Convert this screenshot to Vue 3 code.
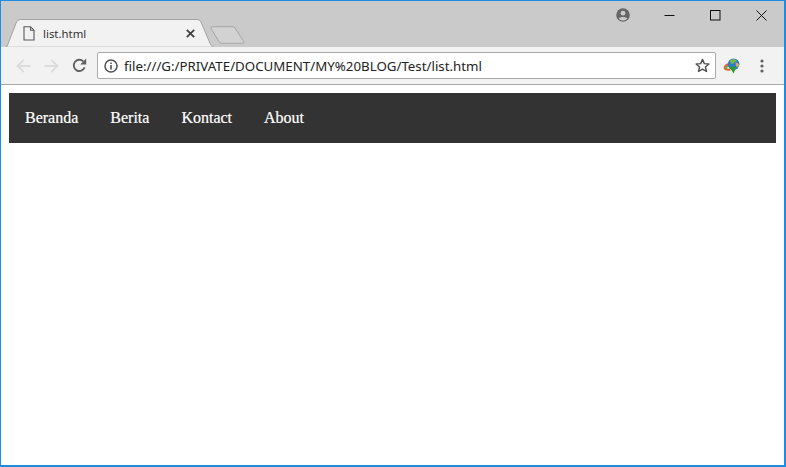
<template>
  <div class="window">
    <header class="titlebar">
      <div class="tab">
        <svg class="tab-shape" width="208" height="28" viewBox="0 0 208 28">
          <path d="M0 27.5 L1 27.5 L10.5 3 Q11.5 .5 14.5 .5 L191 .5 Q194 .5 195 3 L204.5 25.5 Q205.5 27.5 207.5 27.5" fill="#f2f2f2" stroke="#a3a3a3" stroke-width="1" />
        </svg>
        <svg class="doc" width="12" height="15" viewBox="0 0 12 15">
          <path d="M1 .7 H7.5 L11 4.2 V14 H1 Z M7.5 .7 V4.2 H11" fill="none" stroke="#5a5a5a" stroke-width="1.1" />
        </svg>
        <span class="tab-title">list.html</span>
        <svg class="tab-close" width="9" height="9" viewBox="0 0 9 9">
          <path d="M.8 .8 L8.2 8.2 M8.2 .8 L.8 8.2" stroke="#3c3c3c" stroke-width="1.7" />
        </svg>
      </div>
      <svg class="newtab" width="36" height="19" viewBox="0 0 36 19">
        <path d="M1 2.5 Q.7 .7 2.5 .7 H23 Q24.5 .7 25 2 L33.7 15.5 Q34.5 17.3 32.5 17.3 H11.5 Q10 17.3 9.3 16 Z" fill="#d2d2d2" stroke="#a5a5a5" stroke-width="1" />
      </svg>
      <div class="spacer"></div>
      <svg class="profile" width="14" height="14" viewBox="0 0 14 14">
        <circle cx="7" cy="7" r="6.8" fill="#666" />
        <circle cx="7" cy="5.2" r="2.4" fill="#cacaca" />
        <path d="M2.8 10.4 C4 8.4 10 8.4 11.2 10.4 C10 12 8.5 12.4 7 12.4 C5.5 12.4 4 12 2.8 10.4 Z" fill="#cacaca" />
      </svg>
      <div class="win-controls">
        <button class="win-btn"><svg width="11" height="11" viewBox="0 0 11 11"><path d="M.5 5.5 H10.5" stroke="#111" stroke-width="1" /></svg></button>
        <button class="win-btn"><svg width="11" height="11" viewBox="0 0 11 11"><rect x=".5" y=".5" width="9.5" height="9.5" fill="none" stroke="#111" stroke-width="1" /></svg></button>
        <button class="win-btn"><svg width="11" height="11" viewBox="0 0 11 11"><path d="M.5 .5 L10.5 10.5 M10.5 .5 L.5 10.5" stroke="#111" stroke-width="1" /></svg></button>
      </div>
    </header>

    <div class="toolbar">
      <svg class="nav-icon back" width="15" height="14" viewBox="0 0 15 14">
        <path d="M14.5 7 H2 M7.6 1 L1.6 7 L7.6 13" fill="none" stroke="#dcdcdc" stroke-width="1.9" />
      </svg>
      <svg class="nav-icon forward" width="15" height="14" viewBox="0 0 15 14">
        <path d="M.5 7 H13 M7.4 1 L13.4 7 L7.4 13" fill="none" stroke="#dcdcdc" stroke-width="1.9" />
      </svg>
      <svg class="nav-icon reload" width="15" height="15" viewBox="0 0 15 15">
        <path d="M12.6 9.4 A5.6 5.6 0 1 1 11.3 3.4" fill="none" stroke="#606060" stroke-width="1.9" />
        <path d="M14.2 .6 V6.6 H8.2 Z" fill="#606060" />
      </svg>
      <div class="omnibox">
        <svg class="info" width="14" height="14" viewBox="0 0 14 14">
          <circle cx="7" cy="7" r="6" fill="none" stroke="#505050" stroke-width="1.5" />
          <path d="M7 6 V10.6 M7 3.4 V5" stroke="#505050" stroke-width="1.6" />
        </svg>
        <span class="url">file:///G:/PRIVATE/DOCUMENT/MY%20BLOG/Test/list.html</span>
        <svg class="star" width="15" height="15" viewBox="0 0 15 15">
          <path d="M7.5 1.4 L9.3 5.6 L13.9 6 L10.4 9 L11.5 13.5 L7.5 11.1 L3.5 13.5 L4.6 9 L1.1 6 L5.7 5.6 Z" fill="none" stroke="#505050" stroke-width="1.4" stroke-linejoin="round" />
        </svg>
      </div>
      <svg class="idm" width="17" height="16" viewBox="0 0 17 16">
        <path d="M.6 10 C1 6 4.5 4.6 7 5.4 L7.5 12.5 C5 13 1.5 13 .6 10 Z" fill="#e0682c" />
        <path d="M2.2 10 C3 7.6 5 7 7 7.6 L7.5 10.5 C5.5 11 3.5 11 2.2 10 Z" fill="#5db04a" />
        <path d="M3.6 10 C4.4 9 5.5 8.8 7 9.2 L7.5 10.6 C6 10.8 4.6 10.8 3.6 10 Z" fill="#f3f3f3" />
        <circle cx="10.6" cy="6.2" r="5.8" fill="#2f7dc9" />
        <path d="M7 2.5 C9 .8 12 .8 13.5 2.5 C12.5 4.5 10.5 3.8 10 6 C8.5 6.5 7.2 5 7 2.5 Z" fill="#7ab648" />
        <path d="M12.5 4.5 C14 4.5 15.6 5.5 16 7 C15.5 9 14 9.5 13.2 8.5 Z" fill="#d8b24a" />
        <path d="M5.4 7.6 L9 9.4 L13.6 8 L10.6 15.6 L9 13 Z" fill="#2e9a2e" />
      </svg>
      <svg class="menu" width="4" height="14" viewBox="0 0 4 14">
        <circle cx="2" cy="2" r="1.6" fill="#606060" />
        <circle cx="2" cy="7" r="1.6" fill="#606060" />
        <circle cx="2" cy="12" r="1.6" fill="#606060" />
      </svg>
    </div>

    <main class="page">
      <nav class="site-nav">
        <a v-for="item in items" :key="item" class="site-link">{{ item }}</a>
      </nav>
    </main>
  </div>
</template>

<script setup>
const items = ['Beranda', 'Berita', 'Kontact', 'About']
</script>

<style>
html, body { margin: 0; padding: 0; overflow: hidden; background: #fff; }
</style>

<style scoped>
.window {
  box-sizing: border-box;
  width: 786px;
  height: 467px;
  display: flex;
  flex-direction: column;
  border: solid #1e8ce3;
  border-width: 1px 2px 2px 1px;
  background: #fff;
  font-family: "Open Sans", "Noto Sans", sans-serif;
}
.titlebar {
  height: 46px;
  flex: none;
  display: flex;
  align-items: flex-end;
  background: #cacaca;
  box-sizing: border-box;
}
.tab {
  position: relative;
  width: 208px;
  height: 28px;
  margin-left: 5px;
  display: flex;
  align-items: center;
  flex: none;
}
.tab-shape { position: absolute; left: 0; top: 0; }
.doc { position: relative; margin-left: 17px; }
.tab-title {
  position: relative;
  margin-left: 8px;
  margin-top: 0;
  font-size: 11.4px;
  font-family: "Noto Sans", sans-serif;
  color: #333;
}
.tab-close { position: relative; margin-left: 100px; }
.newtab { flex: none; margin-left: -4px; margin-bottom: 2px; }
.spacer { flex: 1; }
.profile { flex: none; align-self: flex-start; margin-top: 7px; margin-right: 16px; }
.win-controls { display: flex; align-self: flex-start; flex: none; }
.win-btn {
  width: 46px;
  height: 28px;
  padding: 0;
  border: 0;
  background: none;
  display: flex;
  align-items: center;
  justify-content: center;
}
.win-btn svg { display: block; }
.toolbar {
  height: 38px;
  flex: none;
  box-sizing: border-box;
  display: flex;
  align-items: center;
  background: #f2f2f2;
  border-bottom: 1px solid #a9a9a9;
}
.nav-icon { flex: none; }
.back { margin-left: 15px; }
.forward { margin-left: 13px; }
.reload { margin-left: 13px; }
.omnibox {
  box-sizing: border-box;
  margin-left: 10px;
  width: 619px;
  height: 27px;
  flex: none;
  display: flex;
  align-items: center;
  background: #fff;
  border: 1px solid #aaa;
  border-radius: 2px;
}
.info { flex: none; margin-left: 6px; }
.url {
  margin-left: 6px;
  font-size: 13.3px;
  color: #222;
  white-space: nowrap;
  font-family: "Noto Sans", sans-serif;
}
.star { flex: none; margin-left: auto; margin-right: 5px; }
.idm { flex: none; margin-left: 7px; }
.menu { flex: none; margin-left: 20px; }
.page { flex: 1; padding: 8px; background: #fff; min-height: 0; }
.site-nav {
  display: flex;
  width: 767px;
  background: #333;
  font-family: "Liberation Serif", serif;
  font-size: 16px;
  color: #fff;
  -webkit-text-stroke: 0.2px #fff;
}
.site-link { padding: 16px; line-height: 18px; }
</style>
